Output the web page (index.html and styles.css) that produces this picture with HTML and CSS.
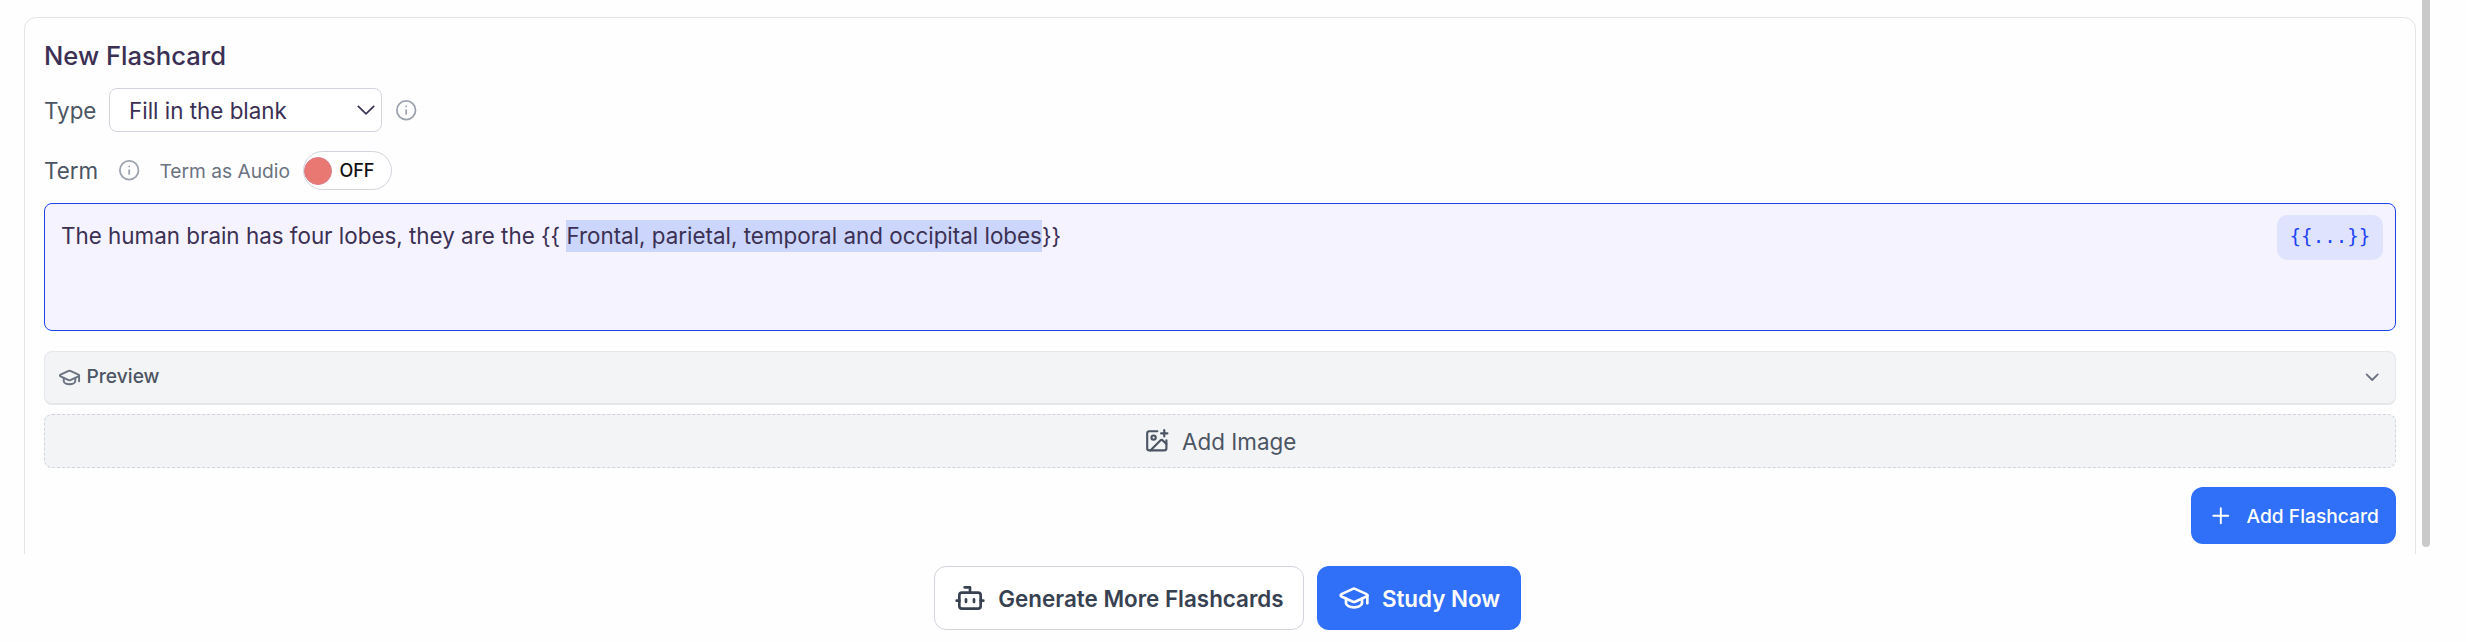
FILE: index.html
```html
<!DOCTYPE html>
<html lang="en">
<head>
    <meta charset="UTF-8">
    <meta name="viewport" content="width=device-width, initial-scale=1.0">
    <title>New Flashcard</title>
    <link rel="stylesheet" href="styles.css">
</head>
<body>

    <div class="scroll-area">
        <div class="card">
            <h2>New Flashcard</h2>

            <div class="row type-row">
                <span class="label">Type</span>
                <button class="select">
                    <span>Fill in the blank</span>
                    <svg width="20" height="12" viewBox="0 0 20 12" fill="none" stroke="currentColor" stroke-width="1.7"><path d="M1.8 1.8 10 9.8l8.2-8"/></svg>
                </button>
                <svg class="info" viewBox="0 0 24 24"><circle cx="12" cy="12" r="10"/><path d="M12 16v-4M12 8h.01"/></svg>
            </div>

            <div class="row term-row">
                <span class="label term-label">Term</span>
                <svg class="info" viewBox="0 0 24 24"><circle cx="12" cy="12" r="10"/><path d="M12 16v-4M12 8h.01"/></svg>
                <span class="audio-label">Term as Audio</span>
                <button class="toggle"><span class="knob"></span>OFF</button>
            </div>

            <div class="editor">
                <p class="editor-text">The human brain has four lobes, they are the {{ <span class="selected">Frontal, parietal, temporal and occipital lobes</span>}}</p>
                <button class="blank-button">{{...}}</button>
            </div>

            <div class="preview">
                <svg class="icon cap-small" viewBox="0 0 24 24"><path d="M21.42 10.922a1 1 0 0 0-.019-1.838L12.83 5.18a2 2 0 0 0-1.66 0L2.6 9.08a1 1 0 0 0 0 1.832l8.57 3.908a2 2 0 0 0 1.66 0z"/><path d="M22 10v6"/><path d="M6 12.5V16a6 3 0 0 0 12 0v-3.5"/></svg>
                <span class="preview-text">Preview</span>
                <svg class="icon chevron" viewBox="0 0 24 24"><path d="m6 9 6 6 6-6"/></svg>
            </div>

            <button class="add-image">
                <svg class="icon image-icon" viewBox="0 0 24 24"><path d="M16 5h6"/><path d="M19 2v6"/><path d="M21 11.5V19a2 2 0 0 1-2 2H5a2 2 0 0 1-2-2V5a2 2 0 0 1 2-2h7.5"/><path d="m21 15-3.086-3.086a2 2 0 0 0-2.828 0L6 21"/><circle cx="9" cy="9" r="2"/></svg>
                <span>Add Image</span>
            </button>

            <div class="card-actions">
                <button class="button primary add-button">
                    <svg class="icon plus" viewBox="0 0 24 24"><path d="M5 12h14M12 5v14"/></svg>
                    <span>Add Flashcard</span>
                </button>
            </div>
        </div>
        <div class="scrollbar"></div>
    </div>

    <div class="footer">
        <button class="button generate">
            <svg class="icon" viewBox="0 0 24 24"><path d="M12 8V4H8"/><rect width="16" height="12" x="4" y="8" rx="2"/><path d="M2 14h2M20 14h2M15 13v2M9 13v2"/></svg>
            <span>Generate More Flashcards</span>
        </button>
        <button class="button primary study">
            <svg class="icon" viewBox="0 0 24 24"><path d="M21.42 10.922a1 1 0 0 0-.019-1.838L12.83 5.18a2 2 0 0 0-1.66 0L2.6 9.08a1 1 0 0 0 0 1.832l8.57 3.908a2 2 0 0 0 1.66 0z"/><path d="M22 10v6"/><path d="M6 12.5V16a6 3 0 0 0 12 0v-3.5"/></svg>
            <span>Study Now</span>
        </button>
    </div>

</body>
</html>
```
FILE: styles.css
```css
* {
    box-sizing: border-box;
}

body {
    font-family: Inter, "Liberation Sans", sans-serif;
    font-size: 22.4px;
    margin: 0;
    background-color: #fefefe;
    color: #3b3054;
}

button {
    font: inherit;
    color: inherit;
    margin: 0;
    padding: 0;
    cursor: pointer;
}

svg {
    flex: none;
}

.scroll-area {
    height: 554px;
    padding: 17px 36px 0 24px;
    display: flex;
    overflow: hidden;
}

.card {
    flex: 1;
    height: 560px;
    padding: 19px 19px 0;
    border: 1px solid #e5e5e7;
    border-radius: 12px;
}

.scrollbar {
    width: 8px;
    height: 547px;
    margin-top: -17px;
    margin-left: 6px;
    border-radius: 0 0 4px 4px;
    background-color: #cacaca;
}

h2 {
    margin: 0;
    font-size: 25.6px;
    font-weight: 500;
    line-height: 38px;
}

.row {
    display: flex;
    align-items: center;
}

.type-row {
    height: 44px;
    margin-top: 13px;
}

.label {
    width: 65px;
    color: #4b5563;
}

.select {
    width: 273px;
    height: 44px;
    margin-right: 13px;
    padding: 0 5px 0 19px;
    display: flex;
    align-items: center;
    justify-content: space-between;
    background-color: white;
    border: 1px solid #d1d5db;
    border-radius: 8px;
}

.info {
    width: 22.4px;
    height: 22.4px;
    fill: none;
    stroke: #9ca3af;
    stroke-width: 1.9;
    stroke-linecap: round;
}

.term-row {
    height: 39px;
    margin-top: 19px;
}

.term-label {
    width: 74px;
}

.audio-label {
    width: 144px;
    margin-left: 19px;
    font-size: 19.2px;
    color: #6b7280;
}

.toggle {
    width: 89px;
    height: 39px;
    display: flex;
    align-items: center;
    gap: 7px;
    font-size: 18px;
    font-weight: 500;
    color: #111;
    background-color: white;
    border: 1px solid #d1d5db;
    border-radius: 20px;
}

.knob {
    width: 28px;
    height: 28px;
    border: 1px solid #d97b88;
    border-radius: 50%;
    background-color: #e97872;
}

.editor {
    height: 128px;
    margin-top: 13px;
    padding: 11px 12px 0 16px;
    display: flex;
    align-items: flex-start;
    justify-content: space-between;
    background-color: #f5f3ff;
    border: 1px solid #1d44eb;
    border-radius: 8px;
}

.editor-text {
    margin: 5px 0 0;
    line-height: 32px;
}

.selected {
    display: inline-block;
    background-color: #ccd6fd;
}

.blank-button {
    width: 106px;
    height: 45px;
    padding-bottom: 3px;
    font-family: "DejaVu Sans Mono", monospace;
    font-size: 19.2px;
    color: #1d44f5;
    background-color: #dfe3fd;
    border: none;
    border-radius: 10px;
}

.icon {
    width: 32px;
    height: 32px;
    fill: none;
    stroke: currentColor;
    stroke-width: 2;
    stroke-linecap: round;
    stroke-linejoin: round;
}

.preview {
    height: 54px;
    margin-top: 20px;
    padding: 0 12px 0 13px;
    display: flex;
    align-items: center;
    font-size: 19.2px;
    font-weight: 500;
    color: #4b5563;
    background-color: #f3f4f6;
    border: 1px solid #e5e7eb;
    border-bottom-width: 2px;
    border-radius: 8px;
}

.preview-text {
    flex: 1;
    padding-bottom: 3px;
}

.cap-small {
    width: 23px;
    height: 23px;
    margin-right: 5.5px;
    color: #6b7280;
}

.chevron {
    width: 22.4px;
    height: 22.4px;
    color: #6b7280;
}

.add-image {
    width: 100%;
    height: 54px;
    margin-top: 9px;
    display: flex;
    align-items: center;
    justify-content: center;
    gap: 12.8px;
    color: #4b5563;
    background-color: #f3f4f6;
    border: 1px dashed #d1d5db;
    border-radius: 8px;
}

.image-icon {
    width: 25.6px;
    height: 25.6px;
}

.card-actions {
    margin-top: 19px;
    display: flex;
    justify-content: flex-end;
}

.button {
    display: flex;
    align-items: center;
    justify-content: center;
    border: none;
    border-radius: 12px;
    font-weight: 600;
}

.primary {
    color: white;
    background-color: #306ff7;
}

.add-button {
    width: 205px;
    height: 57px;
    gap: 12.8px;
    font-size: 19.2px;
    font-weight: 500;
}

.plus {
    width: 25.6px;
    height: 25.6px;
    stroke-width: 1.8;
}

.footer {
    margin-top: 12px;
    padding-right: 11px;
    display: flex;
    justify-content: center;
    gap: 13px;
}

.generate {
    width: 370px;
    height: 64px;
    gap: 12px;
    color: #374151;
    background-color: white;
    border: 1px solid #d1d5db;
}

.study {
    width: 204px;
    height: 64px;
    gap: 12px;
}
```
